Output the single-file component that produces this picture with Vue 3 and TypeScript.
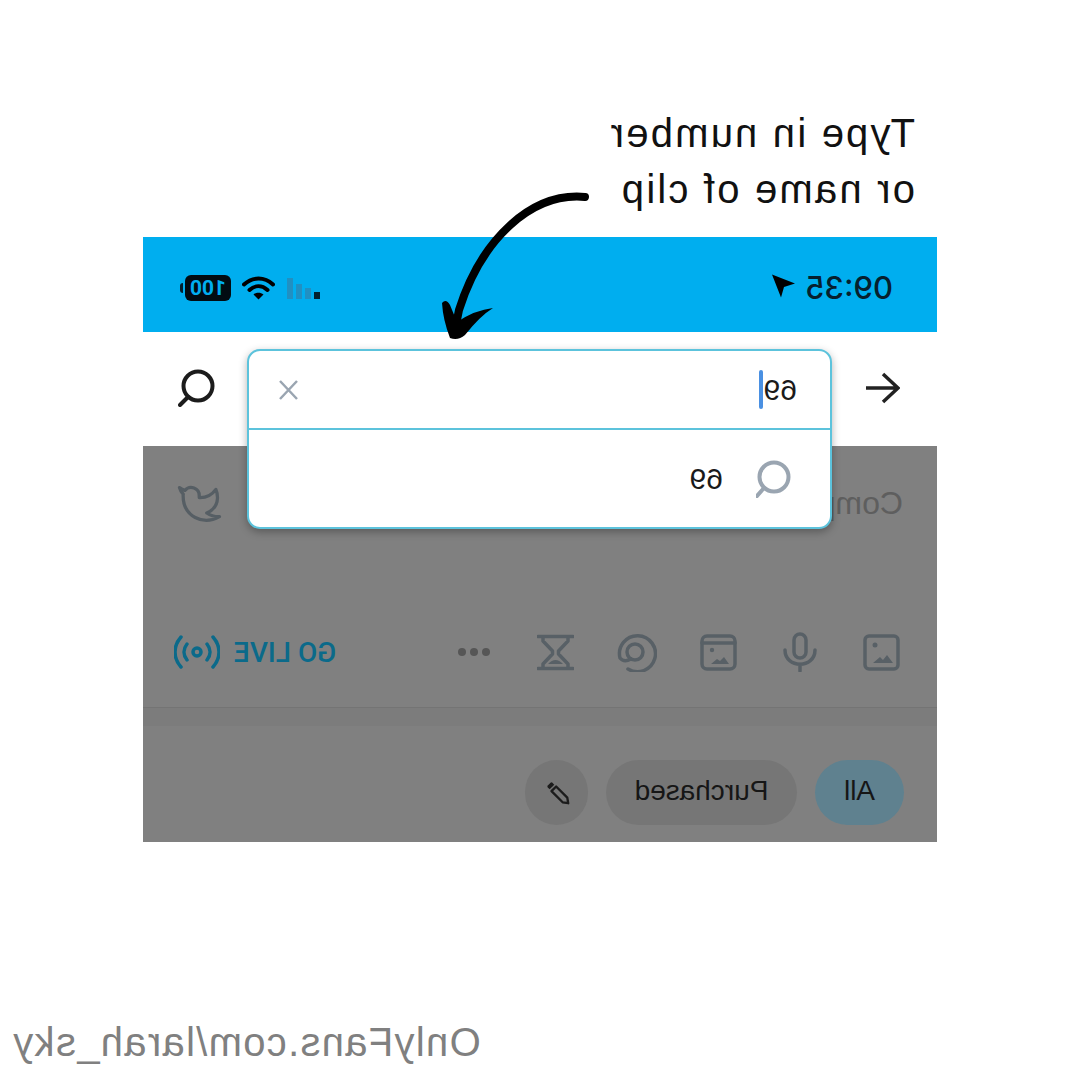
<template>
  <div class="page">
    <div class="caption">
      <div>Type in number</div>
      <div>or name of clip</div>
    </div>

    <div class="phone">
      <div class="status-bar">
        <span class="time">09:35</span>
        <svg class="location" viewBox="0 0 24 24"><path d="M23 1 14 24l-3-10.500L0 10z" /></svg>
        <div class="status-right">
          <div class="signal">
            <i v-for="(bar, i) in signalBars" :key="i" :class="{ on: bar.on }" :style="{ height: bar.h + 'px' }"></i>
          </div>
          <svg class="wifi" viewBox="0 0 33 24">
            <path d="M2 8.500C10.500 .5 22.500 .5 31 8.500M7.500 14c5.500-5 12.500-5 18 0" fill="none" stroke="#000" stroke-width="4" stroke-linecap="round" />
            <path d="M11.500 18.500c3-2.500 7-2.500 10 0l-5 5z" />
          </svg>
          <div class="battery"><span>100</span></div>
        </div>
      </div>

      <div class="search-row">
        <svg class="back" viewBox="0 0 36 32"><path d="M34 16H2M17 2 2 16l15 14" /></svg>
        <svg class="search" viewBox="0 0 40 38"><circle cx="20" cy="17" r="14.500" /><path d="m30 28 8 8" /></svg>
      </div>

      <div class="dimmed">
        <div class="compose">
          <span>Compose</span>
          <svg class="bird" viewBox="0 0 24 22"><path d="M23 2.500a10.900 10.900 0 0 1-3 1.530 4.480 4.480 0 0 0-7.860 3v1A10.660 10.660 0 0 1 3 3.500s-4 9 5 13a11.640 11.640 0 0 1-7 2c9 5 20 0 20-11.500a4.500 4.500 0 0 0-.08-.83A7.720 7.720 0 0 0 23 2.500z" /></svg>
        </div>

        <div class="toolbar">
          <svg class="tool" viewBox="0 0 37 37">
            <rect x="2" y="2" width="33" height="33" rx="4" />
            <circle class="solid" cx="25" cy="11" r="2.500" />
            <path class="solid" d="M7 29 13 21l4 5 3-3 7 6z" />
          </svg>
          <svg class="tool mic" viewBox="0 0 34 40">
            <rect x="11" y="2" width="12" height="24" rx="6" />
            <path d="M2 18c0 19 30 19 30 0M17 32v7" />
          </svg>
          <svg class="tool vault" viewBox="0 0 37 37">
            <rect x="2" y="2" width="33" height="33" rx="5" />
            <path d="M2 9h33" />
            <circle class="solid" cx="25" cy="16" r="2.200" />
            <path class="solid" d="M8 30 13 23l4 4 3-2 6 5z" />
          </svg>
          <svg class="tool at" viewBox="0 0 40 40">
            <circle cx="22" cy="20" r="8" />
            <path d="M29 37A18 18 0 1 1 37 26Q33 31 26 27" />
          </svg>
          <svg class="tool" viewBox="0 0 37 37">
            <path d="M1 2.500h35M1 34.500h35M6 3v4l9.500 10v3L6 30v4M31 3v4l-9.500 10v3L31 30v4" />
            <path class="solid" d="M11 30q7.500-8 15 0z" />
          </svg>
          <div class="dots"><i></i><i></i><i></i></div>
          <span class="go-live">GO LIVE</span>
          <svg class="live" viewBox="0 0 46 34">
            <circle cx="23" cy="17" r="4" />
            <path d="M13 9c-4 5-4 11 0 16M33 9c4 5 4 11 0 16M7 2C-1 11-1 23 7 32M39 2c8 9 8 21 0 30" />
          </svg>
        </div>
        <div class="shade"></div>

        <div class="chips">
          <span class="chip active">All</span>
          <span class="chip">Purchased</span>
          <span class="chip round">
            <svg class="pencil" viewBox="0 0 28 28">
              <path d="M3 25l1-6L16 7l5 5L9 24z" fill="none" stroke="#1c1c1c" stroke-width="2.500" stroke-linejoin="round" />
              <path d="M18 5l2-2q1-1 2 0l3 3q1 1 0 2l-2 2z" />
            </svg>
          </span>
        </div>
      </div>

      <div class="popover">
        <div class="popover-input">
          <span class="value">69</span><span class="caret"></span>
          <svg class="clear" viewBox="0 0 21 20"><path d="m2 1 17 18M19 1 2 19" /></svg>
        </div>
        <div class="popover-result">
          <svg class="result-icon" viewBox="0 0 38 38"><circle cx="20" cy="17" r="14.500" /><path d="m30 28 7 8" /></svg>
          <span class="value">69</span>
        </div>
      </div>
    </div>

    <svg class="pointer" viewBox="480 190 170 155">
      <path class="shaft" d="M494 197C548 192 598 240 620 310L624 330" />
      <path d="M637 303Q633 298 629 305L622 322Q604 310 586 308Q599 316 614 335Q621 341 629 338Q636 320 637 303z" />
    </svg>

    <div class="footer">OnlyFans.com/larah_sky</div>
  </div>
</template>

<script setup lang="ts">
interface Bar {
  h: number
  on: boolean
}

const signalBars: Bar[] = [
  { h: 7, on: true },
  { h: 11, on: false },
  { h: 15, on: false },
  { h: 21, on: false }
]
</script>

<style>
html,
body {
  margin: 0;
  background: #fff;
  overflow: hidden;
}
</style>

<style scoped>
.page {
  position: relative;
  width: 1079px;
  height: 1079px;
  display: flex;
  flex-direction: column;
  background: #fff;
  transform: scaleX(-1);
  font-family: "Liberation Sans", sans-serif;
}

.caption {
  margin: 105px 0 0 164px;
  height: 132px;
  font-size: 40px;
  letter-spacing: 2.200px;
  line-height: 56px;
  color: #111;
}

.phone {
  position: relative;
  width: 794px;
  margin-left: 142px;
  flex: none;
}

.status-bar {
  height: 95px;
  background: #00aeef;
  display: flex;
  align-items: center;
  padding: 6px 37px 0 44px;
  box-sizing: border-box;
}

.time {
  font-family: Inter, sans-serif;
  font-size: 31px;
  font-weight: 500;
  color: #06202e;
}

.location {
  width: 24px;
  height: 25px;
  margin: -4px 0 0 10px;
}

.status-right {
  margin-left: auto;
  display: flex;
  align-items: center;
}

.signal {
  display: flex;
  align-items: flex-end;
  gap: 3px;
  height: 21px;
  margin-top: 2px;
}

.signal i {
  width: 6px;
  background: #2190c2;
}

.signal i.on {
  background: #02202e;
}

.wifi {
  width: 33px;
  height: 24px;
  margin: 0 11px 0 12px;
}

.battery {
  width: 46px;
  height: 26px;
  margin-right: 5px;
  border-radius: 6px;
  background: #020c12;
  color: #00aeef;
  font-family: Roboto, sans-serif;
  font-size: 21px;
  font-weight: 700;
  line-height: 26px;
  text-align: center;
  position: relative;
}

.battery::after {
  content: "";
  position: absolute;
  right: -5px;
  top: 8px;
  width: 3px;
  height: 10px;
  border-radius: 0 3px 3px 0;
  background: #02202e;
}

.search-row {
  height: 114px;
  display: flex;
  align-items: center;
  justify-content: space-between;
  padding: 0 35px 2px 37px;
  box-sizing: border-box;
  background: #fff;
}

.back {
  width: 36px;
  height: 32px;
  fill: none;
  stroke: #222;
  stroke-width: 3.500;
}

.search {
  width: 40px;
  height: 38px;
  fill: none;
  stroke: #1c1c1c;
  stroke-width: 4;
  stroke-linecap: round;
}

.dimmed {
  height: 396px;
  background: #808080;
}

.compose {
  height: 114px;
  margin-bottom: 37px;
  padding: 0 34px;
  display: flex;
  align-items: center;
  justify-content: space-between;
  font-size: 32px;
  color: #5e5e5e;
}

.bird {
  width: 45px;
  height: 40px;
  fill: none;
  stroke: #565e64;
  stroke-width: 1.800;
  stroke-linejoin: round;
}

.toolbar {
  height: 111px;
  padding: 0 31px 0 37px;
  box-sizing: border-box;
  display: flex;
  align-items: center;
  gap: 43px;
  border-bottom: 1px solid #747474;
}

.tool {
  width: 37px;
  height: 37px;
  flex: none;
  fill: none;
  stroke: #586066;
  stroke-width: 3.500;
  stroke-linecap: round;
  stroke-linejoin: round;
}

.tool .solid {
  fill: #586066;
  stroke: none;
}

.mic {
  width: 34px;
  height: 40px;
  margin-left: 3px;
}

.vault {
  margin-left: 3px;
}

.at {
  width: 40px;
  height: 40px;
}

.dots {
  display: flex;
  gap: 4px;
  width: 32px;
  flex: none;
  margin-left: 4px;
}

.dots i {
  width: 8px;
  height: 8px;
  border-radius: 50%;
  background: #565656;
}

.go-live {
  margin-left: auto;
  font-family: Roboto, sans-serif;
  font-size: 28px;
  font-weight: 500;
  color: #0b6a8a;
  white-space: nowrap;
}

.live {
  width: 46px;
  height: 34px;
  margin-left: -29px;
  fill: none;
  stroke: #0b6a8a;
  stroke-width: 3.500;
  stroke-linecap: round;
}

.shade {
  height: 18px;
  background: #7c7c7c;
}

.chips {
  padding: 34px 0 0 33px;
  display: flex;
  gap: 18px;
}

.chip {
  height: 65px;
  width: 191px;
  box-sizing: border-box;
  display: flex;
  align-items: center;
  justify-content: center;
  border-radius: 33px;
  background: #767676;
  color: #161616;
  font-size: 28px;
  padding-bottom: 3px;
}

.chip.active {
  width: 89px;
  background: #5f818f;
}

.chip.round {
  width: 63px;
  padding-bottom: 0;
}

.pencil {
  width: 26px;
  height: 26px;
  margin-right: 3px;
  fill: #1c1c1c;
}

.popover {
  position: absolute;
  left: 105px;
  top: 112px;
  width: 585px;
  height: 180px;
  box-sizing: border-box;
  border: 2px solid #5cc3dc;
  border-radius: 13px;
  background: #fff;
  box-shadow: 0 3px 8px rgba(0, 0, 0, 0.3);
}

.popover-input {
  height: 77px;
  padding: 0 29px 0 33px;
  display: flex;
  align-items: center;
  border-bottom: 2px solid #5cc3dc;
}

.value {
  font-size: 30px;
  color: #1a1a1a;
}

.caret {
  width: 4px;
  height: 39px;
  margin-left: 1px;
  border-radius: 2px;
  background: #4a90e2;
}

.clear {
  width: 21px;
  height: 20px;
  margin-left: auto;
  fill: none;
  stroke: #9aa5b1;
  stroke-width: 2.500;
}

.popover-result {
  height: 98px;
  padding: 0 36px;
  display: flex;
  align-items: center;
  gap: 33px;
}

.result-icon {
  width: 38px;
  height: 38px;
  fill: none;
  stroke: #9aa5b1;
  stroke-width: 4;
  stroke-linecap: round;
}

.pointer {
  position: absolute;
  left: 480px;
  top: 190px;
  width: 170px;
  height: 155px;
  fill: #000;
}

.shaft {
  fill: none;
  stroke: #000;
  stroke-width: 8;
  stroke-linecap: round;
}

.footer {
  margin-top: auto;
  padding: 0 12px 12px 0;
  text-align: right;
  font-size: 40px;
  letter-spacing: 1.300px;
  line-height: 50px;
  color: #808080;
}
</style>
